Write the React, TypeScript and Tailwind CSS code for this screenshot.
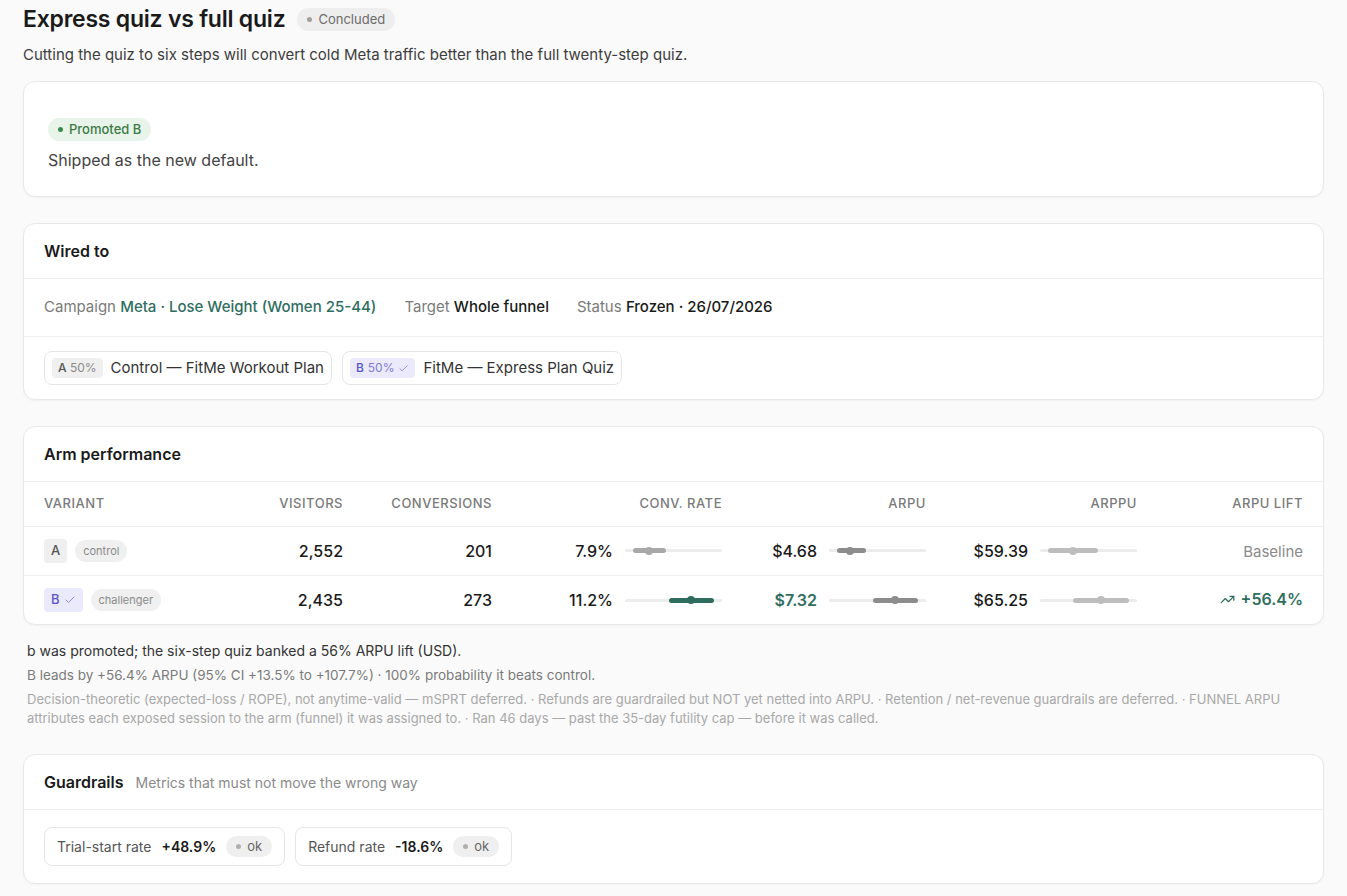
import { TrendingUp, Check } from "lucide-react";

const font = { fontFamily: "Inter, 'Noto Sans', sans-serif" };

function Bar({ lo, hi, mid, color }: { lo: number; hi: number; mid: number; color: string }) {
  return (
    <div className="relative h-[3px] w-[97px] rounded-full bg-[#ececec]">
      <div className="absolute top-[-1px] h-[5px] rounded-full" style={{ left: `${lo}%`, width: `${hi - lo}%`, background: color }} />
      <div className="absolute top-[-2.5px] h-[8px] w-[8px] -translate-x-1/2 rounded-full" style={{ left: `${mid}%`, background: color }} />
    </div>
  );
}

function Card({ children, className = "" }: { children: React.ReactNode; className?: string }) {
  return <section className={`rounded-xl border border-[#e8e8e8] bg-white shadow-[0_1px_2px_rgba(0,0,0,0.04)] ${className}`}>{children}</section>;
}

const rows = [
  {
    v: "A", role: "control", visitors: "2,552", conv: "201", rate: "7.9%", rateBar: [8, 42, 25, "#a8a8a8"],
    arpu: "$4.68", arpuBar: [8, 38, 22, "#8c8c8c"], arppu: "$59.39", arppuBar: [8, 60, 34, "#bdbdbd"], lift: null,
  },
  {
    v: "B", role: "challenger", visitors: "2,435", conv: "273", rate: "11.2%", rateBar: [45, 92, 68, "#2f6e5f"],
    arpu: "$7.32", arpuBar: [45, 92, 68, "#8c8c8c"], arppu: "$65.25", arppuBar: [34, 92, 63, "#bdbdbd"], lift: "+56.4%",
  },
];

export default function App() {
  return (
    <div style={font} className="min-h-screen bg-[#fafafa] px-[23px] pb-4 text-[#1a1a1a]">
      <div className="flex items-center gap-3 pt-[2px]">
        <h1 className="text-[23px] font-semibold tracking-[-0.01em]">Express quiz vs full quiz</h1>
        <span className="flex items-center gap-1.5 rounded-full bg-[#eeeeee] px-2.5 py-[2px] text-[13px] text-[#6b6b6b]">
          <span className="h-[5px] w-[5px] rounded-full bg-[#a0a0a0]" />Concluded
        </span>
      </div>
      <p className="mt-[7px] text-[15px] text-[#3d3d3d]">Cutting the quiz to six steps will convert cold Meta traffic better than the full twenty-step quiz.</p>

      <Card className="mt-[15px] px-6 pt-[32px] pb-[24px]">
        <span className="inline-flex items-center gap-1.5 rounded-full bg-[#e8f4ea] px-2.5 py-[2px] text-[13px] font-medium text-[#3b7a45]">
          <span className="h-[5px] w-[5px] rounded-full bg-[#3b8a48]" />Promoted B
        </span>
        <p className="mt-[7px] text-[16px] text-[#444]">Shipped as the new default.</p>
      </Card>

      <Card className="mt-[26px]">
        <div className="border-b border-[#eeeeee] px-5 py-[15px] text-[16px] font-semibold">Wired to</div>
        <div className="flex gap-7 border-b border-[#f0f0f0] px-5 py-[17px] text-[15px]">
          <span><span className="text-[#7a7a7a]">Campaign </span><span className="font-medium text-[#2f6e5f]">Meta · Lose Weight (Women 25-44)</span></span>
          <span><span className="text-[#7a7a7a]">Target </span><span className="font-medium">Whole funnel</span></span>
          <span><span className="text-[#7a7a7a]">Status </span><span className="font-medium">Frozen · 26/07/2026</span></span>
        </div>
        <div className="flex gap-2.5 px-5 py-[14px]">
          <div className="flex items-center gap-2 rounded-lg border border-[#e6e6e6] px-[7px] py-[5px] text-[15px] text-[#333]">
            <span className="rounded bg-[#efefef] px-1.5 py-[1px] text-[12px]"><span className="font-medium text-[#555]">A</span> <span className="text-[#8a8a8a]">50%</span></span>
            Control — FitMe Workout Plan
          </div>
          <div className="flex items-center gap-2 rounded-lg border border-[#e6e6e6] px-[7px] py-[5px] text-[15px] text-[#333]">
            <span className="flex items-center gap-1 rounded bg-[#ebeafc] px-1.5 py-[1px] text-[12px] text-[#5b55c9]"><span className="font-medium">B</span> <span className="text-[#7f7ad6]">50%</span><Check size={11} className="text-[#8c88d8]" /></span>
            FitMe — Express Plan Quiz
          </div>
        </div>
      </Card>

      <Card className="mt-[26px] overflow-hidden">
        <div className="border-b border-[#eeeeee] px-5 py-[15px] text-[16px] font-semibold">Arm performance</div>
        <table className="w-full border-collapse text-[16px]">
          <thead>
            <tr className="border-b border-[#eeeeee] text-[13px] tracking-[0.04em] text-[#7a7a7a]">
              <th className="h-[44px] pl-5 text-left font-medium">VARIANT</th>
              <th className="w-[120px] text-right font-medium">VISITORS</th>
              <th className="w-[149px] text-right font-medium">CONVERSIONS</th>
              <th className="w-[230px] text-right font-medium">CONV. RATE</th>
              <th className="w-[204px] text-right font-medium">ARPU</th>
              <th className="w-[211px] text-right font-medium">ARPPU</th>
              <th className="w-[186px] pr-5 text-right font-medium">ARPU LIFT</th>
            </tr>
          </thead>
          <tbody>
            {rows.map((r, i) => (
              <tr key={r.v} className={i === 0 ? "border-b border-[#f0f0f0]" : ""}>
                <td className="h-[49px] pl-5">
                  <div className="flex items-center gap-2">
                    {r.v === "A" ? (
                      <span className="rounded bg-[#efefef] px-[7px] py-[2px] text-[13px] font-medium text-[#555]">A</span>
                    ) : (
                      <span className="flex items-center gap-1 rounded bg-[#ebeafc] px-[7px] py-[2px] text-[13px] font-medium text-[#5b55c9]">B<Check size={12} className="text-[#8c88d8]" /></span>
                    )}
                    <span className="rounded-full bg-[#f0f0f0] px-2 py-[3px] text-[11px] text-[#8a8a8a]">{r.role}</span>
                  </div>
                </td>
                <td className="text-right font-medium">{r.visitors}</td>
                <td className="text-right font-medium">{r.conv}</td>
                <td>
                  <div className="flex items-center justify-end gap-3">
                    <span className="font-medium">{r.rate}</span>
                    <Bar lo={r.rateBar[0] as number} hi={r.rateBar[1] as number} mid={r.rateBar[2] as number} color={r.rateBar[3] as string} />
                  </div>
                </td>
                <td>
                  <div className="flex items-center justify-end gap-3">
                    <span className={`font-medium ${r.v === "B" ? "text-[#2f6e5f] font-semibold" : ""}`}>{r.arpu}</span>
                    <Bar lo={r.arpuBar[0] as number} hi={r.arpuBar[1] as number} mid={r.arpuBar[2] as number} color={r.arpuBar[3] as string} />
                  </div>
                </td>
                <td>
                  <div className="flex items-center justify-end gap-3">
                    <span className="font-medium">{r.arppu}</span>
                    <Bar lo={r.arppuBar[0] as number} hi={r.arppuBar[1] as number} mid={r.arppuBar[2] as number} color={r.arppuBar[3] as string} />
                  </div>
                </td>
                <td className="pr-5 text-right">
                  {r.lift ? (
                    <span className="inline-flex items-center gap-1.5 font-semibold text-[#2f6e5f]"><TrendingUp size={15} />{r.lift}</span>
                  ) : (
                    <span className="text-[15px] text-[#8a8a8a]">Baseline</span>
                  )}
                </td>
              </tr>
            ))}
          </tbody>
        </table>
      </Card>

      <div className="mt-[15px] px-1">
        <p className="text-[14px] text-[#333]">b was promoted; the six-step quiz banked a 56% ARPU lift (USD).</p>
        <p className="mt-[4px] text-[13.5px] text-[#7a7a7a]">B leads by +56.4% ARPU (95% CI +13.5% to +107.7%) · 100% probability it beats control.</p>
        <p className="mt-[4px] text-[13px] leading-[19px] text-[#a8a8a8]">Decision-theoretic (expected-loss / ROPE), not anytime-valid — mSPRT deferred. · Refunds are guardrailed but NOT yet netted into ARPU. · Retention / net-revenue guardrails are deferred. · FUNNEL ARPU attributes each exposed session to the arm (funnel) it was assigned to. · Ran 46 days — past the 35-day futility cap — before it was called.</p>
      </div>

      <Card className="mt-[26px]">
        <div className="flex items-baseline gap-3 border-b border-[#eeeeee] px-5 py-[15px]">
          <span className="text-[16px] font-semibold">Guardrails</span>
          <span className="text-[14px] text-[#8a8a8a]">Metrics that must not move the wrong way</span>
        </div>
        <div className="flex gap-2.5 px-5 py-[17px]">
          {[["Trial-start rate", "+48.9%"], ["Refund rate", "-18.6%"]].map(([l, v]) => (
            <div key={l} className="flex items-center gap-2.5 rounded-lg border border-[#e6e6e6] px-3 py-[8px] text-[14px]">
              <span className="text-[#555]">{l}</span>
              <span className="font-semibold">{v}</span>
              <span className="flex items-center gap-1.5 rounded-full bg-[#efefef] px-2.5 py-[1px] text-[13px] text-[#666]">
                <span className="h-[5px] w-[5px] rounded-full bg-[#b0b0b0]" />ok
              </span>
            </div>
          ))}
        </div>
      </Card>
    </div>
  );
}
